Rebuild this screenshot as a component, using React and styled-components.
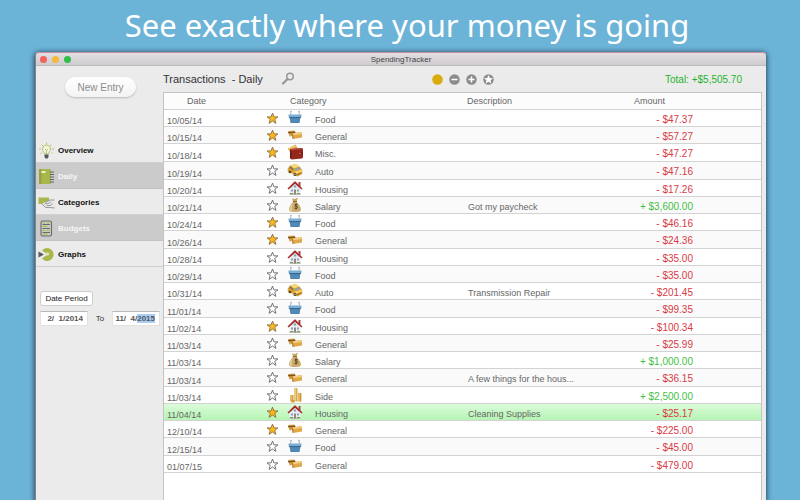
import React, { useEffect, useRef, useState } from "react";
import styled, { createGlobalStyle } from "styled-components";

const transactions = [
  { date: "10/05/14", starred: true, category: "Food", amount: -47.37 },
  { date: "10/15/14", starred: true, category: "General", amount: -57.27 },
  { date: "10/18/14", starred: true, category: "Misc.", amount: -47.27 },
  { date: "10/19/14", starred: false, category: "Auto", amount: -47.16 },
  { date: "10/20/14", starred: false, category: "Housing", amount: -17.26 },
  { date: "10/21/14", starred: false, category: "Salary", description: "Got my paycheck", amount: 3600 },
  { date: "10/24/14", starred: true, category: "Food", amount: -46.16 },
  { date: "10/26/14", starred: true, category: "General", amount: -24.36 },
  { date: "10/28/14", starred: false, category: "Housing", amount: -35 },
  { date: "10/29/14", starred: false, category: "Food", amount: -35 },
  { date: "10/31/14", starred: false, category: "Auto", description: "Transmission Repair", amount: -201.45 },
  { date: "11/01/14", starred: false, category: "Food", amount: -99.35 },
  { date: "11/02/14", starred: true, category: "Housing", amount: -100.34 },
  { date: "11/03/14", starred: false, category: "General", amount: -25.99 },
  { date: "11/03/14", starred: false, category: "Salary", amount: 1000 },
  { date: "11/03/14", starred: false, category: "General", description: "A few things for the hous...", amount: -36.15 },
  { date: "11/03/14", starred: false, category: "Side", amount: 2500 },
  { date: "11/04/14", starred: true, category: "Housing", description: "Cleaning Supplies", amount: -25.17 },
  { date: "12/10/14", starred: true, category: "General", amount: -225 },
  { date: "12/15/14", starred: false, category: "Food", amount: -45 },
  { date: "01/07/15", starred: false, category: "General", amount: -479 },
];

const formatAmount = (value) => {
  const text = Math.abs(value).toLocaleString("en-US", {
    minimumFractionDigits: 2,
    maximumFractionDigits: 2,
  });
  return `${value < 0 ? "-" : "+"} $${text}`;
};

const GlobalStyle = createGlobalStyle`
  * {
    box-sizing: border-box;
  }
  html, body {
    margin: 0;
    height: 100%;
    overflow: hidden;
    background: #6cb3d8;
  }
  #root {
    height: 100%;
  }
  body, button, input {
    font-family: "Liberation Sans", Arial, sans-serif;
  }
`;

const Page = styled.div`
  display: flex;
  flex-direction: column;
  height: 100%;
  padding: 0 34px 0 35px;
`;

const Headline = styled.h1`
  flex: none;
  margin: 0;
  height: 52px;
  line-height: 50px;
  padding-left: 13px;
  text-align: center;
  white-space: nowrap;
  font-family: "Noto Sans", "Open Sans", sans-serif;
  font-size: 31px;
  font-weight: 400;
  color: #fff;
`;

const AppWindow = styled.div`
  flex: 1;
  min-height: 0;
  display: flex;
  flex-direction: column;
  background: #ebebeb;
  border-left: 1px solid #8d7f80;
  border-radius: 4px 4px 0 0;
  box-shadow: 0 1px 5px 1px rgba(15, 40, 60, 0.75);
`;

const TitleBar = styled.div`
  flex: none;
  position: relative;
  display: flex;
  align-items: center;
  gap: 5px;
  height: 14px;
  padding: 0 4px;
  border-top: 1px solid #c98f9a;
  border-bottom: 1px solid #bdbbbd;
  border-radius: 4px 4px 0 0;
  background: linear-gradient(#e2dee2, #cfcccf);
`;

const Light = styled.button`
  width: 7px;
  height: 7px;
  padding: 0;
  border: 0;
  border-radius: 50%;
  background: ${(props) => props.$color};
`;

const WindowName = styled.span`
  position: absolute;
  inset: 0;
  text-align: center;
  font-size: 8px;
  line-height: 14px;
  color: #444;
  pointer-events: none;
`;

const Body = styled.div`
  flex: 1;
  min-height: 0;
  display: flex;
`;

const Sidebar = styled.aside`
  flex: none;
  width: 127px;
`;

const NewEntry = styled.button`
  display: block;
  width: 71px;
  height: 20px;
  margin: 11px 0 40px 29px;
  padding: 0;
  border: 0;
  border-radius: 10px;
  background: linear-gradient(#ffffff, #f3f3f3);
  box-shadow: 0 1px 2px rgba(0, 0, 0, 0.22);
  font-size: 10px;
  color: #8c8c8c;
`;

const NavLink = styled.a`
  display: flex;
  align-items: center;
  gap: 3px;
  height: 26px;
  padding: 1px 0 0 2px;
  border-bottom: 1px solid ${(props) => (props.$shaded ? "#c2c2c2" : "#d0d0d0")};
  background: ${(props) => (props.$shaded ? "#cbcbcb" : "transparent")};
  color: ${(props) => (props.$shaded ? "#f6f6f6" : "#111")};
  font-size: 8px;
  font-weight: 700;
  text-decoration: none;
`;

const Period = styled.div`
  margin-top: 24px;
  padding: 0 3px 0 4px;
`;

const PeriodButton = styled.button`
  display: block;
  width: 53px;
  height: 15px;
  padding: 0;
  border: 1px solid #cdcdcd;
  border-radius: 3px;
  background: #fff;
  font-size: 8px;
  color: #222;
`;

const PeriodRange = styled.div`
  display: flex;
  align-items: center;
  justify-content: space-between;
  margin-top: 5px;
`;

const DateInput = styled.input`
  width: 48px;
  height: 15px;
  padding: 0 4px 0 0;
  border: 1px solid #e2e2e2;
  border-top-color: #b9b9b9;
  outline: none;
  background: #fff;
  text-align: right;
  font-size: 8px;
  font-weight: 700;
  color: #555;
  caret-color: transparent;

  &::selection {
    background: #a9cdf5;
    color: #555;
  }
`;

const RangeLabel = styled.label`
  font-size: 8px;
  color: #333;
`;

const Main = styled.main`
  flex: 1;
  min-width: 0;
  display: flex;
  flex-direction: column;
  padding-right: 4px;
`;

const Toolbar = styled.div`
  flex: none;
  display: grid;
  grid-template-columns: 1fr auto 1fr;
  align-items: center;
  height: 26px;
`;

const Heading = styled.div`
  display: flex;
  align-items: center;
  gap: 18px;
`;

const Title = styled.h2`
  margin: 0;
  font-size: 11px;
  font-weight: 400;
  white-space: pre;
  color: #333;
`;

const IconButton = styled.button`
  display: flex;
  padding: 0;
  border: 0;
  background: none;
`;

const Filters = styled.div`
  display: flex;
  gap: 6px;
`;

const Total = styled.div`
  padding-right: 20px;
  text-align: right;
  font-size: 10px;
  color: #25b32b;
`;

const Sheet = styled.div`
  flex: 1;
  min-height: 0;
  overflow: hidden;
  border: 1px solid #c4c4c4;
  border-bottom: 0;
  background: #fff;
`;

const Table = styled.table`
  width: 100%;
  table-layout: fixed;
  border-collapse: separate;
  border-spacing: 0;
  font-size: 9px;
  line-height: 10px;
  color: #666;
`;

const Col = styled.col`
  width: ${(props) => props.$width};
`;

const HeadCell = styled.th`
  height: 17px;
  padding: 0 ${(props) => props.$right || "0"} 0 ${(props) => props.$left || "0"};
  border-bottom: 1px solid #d3d3d3;
  background: #fcfcfc;
  text-align: ${(props) => props.$align || "left"};
  font-weight: 400;
`;

const Row = styled.tr`
  height: 17px;
  background: #fff;

  &:nth-child(4n) {
    height: 18px;
  }
  &:nth-child(even) {
    background: #fafafa;
  }
  &[aria-selected="true"] {
    background: linear-gradient(#dcfcdb, #b2f4b0);
  }
`;

const Cell = styled.td`
  padding: 3px 0 0;
  border-bottom: 1px solid #d3d3d3;
  white-space: nowrap;
  vertical-align: middle;
`;

const DateCell = styled(Cell)`
  padding: 6px 0 0 3px;
`;

const IconCell = styled(Cell)`
  padding: 0;

  svg {
    display: block;
    margin: 0 auto;
  }
`;

const StarButton = styled(IconButton)`
  margin: 0 auto;
`;

const NameCell = styled(Cell)`
  padding-left: 6px;
`;

const DescriptionCell = styled(Cell)`
  padding-left: 2px;
`;

const AmountCell = styled(Cell)`
  padding-right: 68px;
  text-align: right;
  font-size: 10px;
  color: ${(props) => (props.$income ? "#3fbf45" : "#d93a46")};
`;

const Star = ({ filled }) => (
  <svg width="13" height="13" viewBox="0 0 24 24">
    <path
      d="M12 2l2.700 7H22l-5.800 4.600L18.300 21 12 16.700 5.700 21l2.100-7.400L2 9h7.300z"
      fill={filled ? "#fbb917" : "#fff"}
      stroke={filled ? "#8a6a3a" : "#5f5f5f"}
      strokeWidth="1.600"
    />
  </svg>
);

const BasketIcon = () => (
  <svg width="16" height="16" viewBox="0 0 32 32">
    <path d="M7 11L8 3M25 11L24 3" stroke="#8d99a6" strokeWidth="1.400" fill="none" />
    <circle cx="8" cy="3" r="1.400" fill="#9aa3ad" />
    <circle cx="24" cy="3" r="1.400" fill="#9aa3ad" />
    <path d="M5 14h22l-2 12H7z" fill="#4b83b0" />
    <path d="M3 9h26v5H3z" fill="#7badd2" />
    <path d="M4 14h24v2H4z" fill="#386a94" />
    <path d="M10 18l1 6M14 18v6M18 18v6M22 18l-1 6" stroke="#6298c2" strokeWidth="1.200" />
  </svg>
);

const CardsIcon = () => (
  <svg width="16" height="16" viewBox="0 0 32 32">
    <path d="M2 8l13-1 4 9-14 3z" fill="#d9a145" />
    <path d="M2 10l14-1 1 3-14 1z" fill="#7a5424" />
    <path d="M10 13l20-3v11l-18 3z" fill="#dfa848" />
    <path d="M10 13l20-3v4l-20 3z" fill="#f2cb7b" />
    <path d="M10 13l1 11 2-1-1-10z" fill="#a97428" />
  </svg>
);

const WalletIcon = () => (
  <svg width="17" height="17" viewBox="0 0 34 34">
    <path d="M1 9L17 1l5 8-14 10z" fill="#e6ae54" />
    <path d="M3 9l13-6 1 2L4 11z" fill="#f5d18a" />
    <path d="M6 10l23-2a3 3 0 013 3v15a3 3 0 01-3 3l-19 2a4 4 0 01-4-4z" fill="#93261d" />
    <path d="M6 10l23-2 2 2-23 3z" fill="#b84b35" />
    <path d="M6 10l3 4v16l-3-3z" fill="#6c1812" />
    <path d="M25 17h7v4h-7z" fill="#7a1d15" />
    <circle cx="26" cy="19" r="1.400" fill="#dc9a68" />
  </svg>
);

const TaxiIcon = () => (
  <svg width="16" height="16" viewBox="0 0 32 32">
    <path d="M1 12l5-7 11-3 9 6 5 7-1 7-9 5-11-6-8-3z" fill="#dfa22f" />
    <path d="M6 5l11-3 7 5-10 4z" fill="#f8d774" />
    <path d="M4 10l3-4 6 5-1 4z" fill="#8b7a4d" />
    <path d="M14 12l10-4 4 4-12 4z" fill="#9aa29a" />
    <path d="M15 17l14-4 1 5-12 5z" fill="#f5ca58" />
    <path d="M20 22l9-4v3l-8 4z" fill="#a87623" />
    <circle cx="6" cy="18" r="2.600" fill="#544027" />
    <circle cx="16" cy="23" r="3" fill="#544027" />
    <circle cx="16" cy="23" r="1.200" fill="#ddd" />
    <circle cx="20" cy="19" r="1.200" fill="#fffbe0" />
    <circle cx="28" cy="16" r="1.200" fill="#fffbe0" />
  </svg>
);

const HouseIcon = () => (
  <svg width="16" height="16" viewBox="0 0 32 32">
    <path d="M23 4h4v9h-4z" fill="#a7443c" />
    <path d="M5 16L16 5l11 11v13H5z" fill="#e9eef2" />
    <path d="M5 27h22v3H5z" fill="#b4bdb4" />
    <path d="M1 17L15 3h2l14 14-2 2L16 8 3 19z" fill="#a82c2d" />
    <path d="M16 8l7 7H9z" fill="#d5dde4" />
    <path d="M14 11h4v4h-4z" fill="#8aa0b5" />
    <path d="M8 19h4v4H8zM20 19h4v4h-4z" fill="#84a3bf" />
    <path d="M14 19h4v10h-4z" fill="#9c8578" />
    <path d="M6 26h6v2H6zM20 26h6v2h-6z" fill="#7e9a62" />
  </svg>
);

const MoneyBagIcon = () => (
  <svg width="16" height="16" viewBox="0 0 32 32">
    <path d="M10 3l6 1 6-3-3 8h-7z" fill="#c9a45c" />
    <path d="M12 9h7c3 4 9 10 9 16-1 5-7 5-12 5S5 30 4 25c0-6 6-12 8-16z" fill="#cbaa6b" />
    <path d="M13 11c-3 4-7 8-7 13 0 2 2 4 4 4-2-7 0-12 3-17z" fill="#ead6a6" />
    <path d="M12 8h8v2h-8z" fill="#8a6b30" />
    <path
      d="M21 16c-1-2-5-2-5 0 0 3 5 2 5 5 0 2-4 3-6 1M18 13v12"
      stroke="#4a3a1c"
      strokeWidth="1.800"
      fill="none"
    />
  </svg>
);

const CoinsIcon = () => (
  <svg width="16" height="16" viewBox="0 0 32 32">
    <path d="M6 16h6v13H6z" fill="#e0ad48" />
    <path d="M14 2h6v27h-6z" fill="#ecc066" />
    <path d="M22 12h6v17h-6z" fill="#dba53f" />
    <path d="M12 16v13M20 3v26M28 13v16" stroke="#b57f25" strokeWidth="1.400" />
    <path d="M8 16v13M16 3v26M24 13v16" stroke="#f7dc98" strokeWidth="1.400" />
    <path d="M9 26h6v5H9z" fill="#d19a35" />
  </svg>
);

const categoryIcons = {
  Food: BasketIcon,
  General: CardsIcon,
  "Misc.": WalletIcon,
  Auto: TaxiIcon,
  Housing: HouseIcon,
  Salary: MoneyBagIcon,
  Side: CoinsIcon,
};

const BulbIcon = () => (
  <svg width="17" height="17" viewBox="0 0 34 34">
    <path
      d="M17 1v4M7 5l3 3M27 5l-3 3M2 14h4M28 14h4M5 23l3-2M29 23l-3-2"
      stroke="#b9c46a"
      strokeWidth="1.800"
    />
    <path
      d="M13 24c0-4-4-5-4-10a8 8 0 0116 0c0 5-4 6-4 10z"
      fill="#f1f3dd"
      stroke="#a7b458"
      strokeWidth="1.500"
    />
    <path d="M14 14l3 3 3-3M17 17v7" stroke="#a7b458" strokeWidth="1.500" fill="none" />
    <path d="M13 25h8v5l-2 3h-4l-2-3z" fill="#555a5e" />
  </svg>
);

const NotebookIcon = () => (
  <svg width="17" height="17" viewBox="0 0 34 34">
    <rect x="2" y="2" width="24" height="30" rx="2" fill="#a9b649" />
    <path d="M2 4a2 2 0 012-2h3v30H4a2 2 0 01-2-2z" fill="#96a53d" />
    <path d="M7 6h8v4H7z" fill="#edf0d2" />
    <path
      d="M25 8h6M25 13h6M25 18h6M25 23h6M25 28h6"
      stroke="#5c6166"
      strokeWidth="2.400"
      strokeLinecap="round"
    />
  </svg>
);

const HandIcon = () => (
  <svg width="17" height="17" viewBox="0 0 34 34">
    <path d="M1 7h21v13H1z" fill="#a9b649" />
    <path d="M14 16l10-4h9v15H15l-7-7z" fill="#e6e7e4" />
    <path
      d="M14 17l10-5h9M8 20l7 7h8l10 1M13 20c3-2 7 1 12-4M17 23h8l3-4"
      stroke="#8b9094"
      strokeWidth="1.800"
      fill="none"
    />
  </svg>
);

const CabinetIcon = () => (
  <svg width="17" height="17" viewBox="0 0 34 34">
    <rect x="6" y="2" width="21" height="30" rx="3" fill="#c9ccc0" stroke="#666b72" strokeWidth="2.200" />
    <path d="M9 9h15M9 17h15M9 25h15" stroke="#666b72" strokeWidth="2" />
    <path d="M9 6h5M18 6h5M9 13h10M9 21h5M18 21h5M9 28h10" stroke="#a9b649" strokeWidth="2.400" />
  </svg>
);

const PieIcon = () => (
  <svg width="17" height="17" viewBox="0 0 34 34">
    <path d="M19 17L8 9a13 13 0 110 16z" fill="#a9b649" />
    <circle cx="19" cy="16" r="3.500" fill="#dfe5ae" />
    <path d="M1 11l11 6-11 6z" fill="#575c61" />
  </svg>
);

const SearchIcon = () => (
  <svg width="14" height="14" viewBox="0 0 28 28">
    <circle cx="18" cy="9" r="6.500" fill="none" stroke="#979797" strokeWidth="3" />
    <path d="M13 14L4 23" stroke="#979797" strokeWidth="4.500" strokeLinecap="round" />
  </svg>
);

const FilterIcon = ({ color, children }) => (
  <svg width="11" height="11" viewBox="0 0 22 22">
    <circle cx="11" cy="11" r="10.500" fill={color} />
    {children}
  </svg>
);

const navItems = [
  { label: "Overview", icon: BulbIcon },
  { label: "Daily", icon: NotebookIcon, shaded: true },
  { label: "Categories", icon: HandIcon },
  { label: "Budgets", icon: CabinetIcon, shaded: true },
  { label: "Graphs", icon: PieIcon },
];

const PeriodPicker = () => {
  const [from, setFrom] = useState("2/  1/2014");
  const [to, setTo] = useState("11/  4/2015");
  const toRef = useRef(null);

  // the year part of the end date is the one being edited
  useEffect(() => {
    const input = toRef.current;
    input.focus();
    input.setSelectionRange(input.value.length - 4, input.value.length);
  }, []);

  return (
    <Period>
      <PeriodButton type="button">Date Period</PeriodButton>
      <PeriodRange>
        <DateInput
          aria-label="From"
          value={from}
          onChange={(e) => setFrom(e.target.value)}
        />
        <RangeLabel htmlFor="period-to">To</RangeLabel>
        <DateInput
          id="period-to"
          ref={toRef}
          value={to}
          onChange={(e) => setTo(e.target.value)}
        />
      </PeriodRange>
    </Period>
  );
};

const TransactionRow = ({ item, selected, onSelect }) => {
  const [starred, setStarred] = useState(item.starred);
  const CategoryIcon = categoryIcons[item.category];

  return (
    <Row aria-selected={selected} onClick={onSelect}>
      <DateCell>{item.date}</DateCell>
      <IconCell>
        <StarButton
          type="button"
          aria-label="Star"
          aria-pressed={starred}
          onClick={() => setStarred(!starred)}
        >
          <Star filled={starred} />
        </StarButton>
      </IconCell>
      <IconCell>
        <CategoryIcon />
      </IconCell>
      <NameCell>{item.category}</NameCell>
      <DescriptionCell>{item.description}</DescriptionCell>
      <AmountCell $income={item.amount > 0}>{formatAmount(item.amount)}</AmountCell>
    </Row>
  );
};

const App = () => {
  const [selectedIndex, setSelectedIndex] = useState(17);

  return (
    <>
      <GlobalStyle />
      <Page>
        <Headline>See exactly where your money is going</Headline>
        <AppWindow>
          <TitleBar>
            <Light type="button" aria-label="Close" $color="#f4605a" />
            <Light type="button" aria-label="Minimize" $color="#f6b93b" />
            <Light type="button" aria-label="Zoom" $color="#30c048" />
            <WindowName>SpendingTracker</WindowName>
          </TitleBar>
          <Body>
            <Sidebar>
              <NewEntry type="button">New Entry</NewEntry>
              <nav>
                {navItems.map(({ label, icon: Icon, shaded }) => (
                  <NavLink key={label} href={`#${label.toLowerCase()}`} $shaded={shaded}>
                    <Icon />
                    {label}
                  </NavLink>
                ))}
              </nav>
              <PeriodPicker />
            </Sidebar>
            <Main>
              <Toolbar>
                <Heading>
                  <Title>{"Transactions  - Daily"}</Title>
                  <IconButton type="button" aria-label="Search">
                    <SearchIcon />
                  </IconButton>
                </Heading>
                <Filters>
                  <IconButton type="button" aria-label="All">
                    <FilterIcon color="#d9ac0c" />
                  </IconButton>
                  <IconButton type="button" aria-label="Expenses">
                    <FilterIcon color="#8c8c8c">
                      <path d="M5 11h12" stroke="#fff" strokeWidth="3" />
                    </FilterIcon>
                  </IconButton>
                  <IconButton type="button" aria-label="Income">
                    <FilterIcon color="#8c8c8c">
                      <path d="M5 11h12M11 5v12" stroke="#fff" strokeWidth="3" />
                    </FilterIcon>
                  </IconButton>
                  <IconButton type="button" aria-label="Starred">
                    <FilterIcon color="#8c8c8c">
                      <path
                        d="M11 2l2.600 5.800 6.400.6-4.800 4.200 1.400 6.200-5.600-3.200-5.600 3.200 1.400-6.200L2 8.400l6.400-.6z"
                        fill="#fff"
                      />
                    </FilterIcon>
                  </IconButton>
                </Filters>
                <Total>Total: +$5,505.70</Total>
              </Toolbar>
              <Sheet>
                <Table>
                  <colgroup>
                    <Col $width="99px" />
                    <Col $width="18px" />
                    <Col $width="28px" />
                    <Col $width="157px" />
                    <Col $width="auto" />
                    <Col $width="150px" />
                  </colgroup>
                  <thead>
                    <tr>
                      <HeadCell $left="23px">Date</HeadCell>
                      <HeadCell colSpan={3} $left="27px">Category</HeadCell>
                      <HeadCell $left="1px">Description</HeadCell>
                      <HeadCell $align="right" $right="96px">Amount</HeadCell>
                    </tr>
                  </thead>
                  <tbody>
                    {transactions.map((item, index) => (
                      <TransactionRow
                        key={index}
                        item={item}
                        selected={index === selectedIndex}
                        onSelect={() => setSelectedIndex(index)}
                      />
                    ))}
                  </tbody>
                </Table>
              </Sheet>
            </Main>
          </Body>
        </AppWindow>
      </Page>
    </>
  );
};

export default App;
